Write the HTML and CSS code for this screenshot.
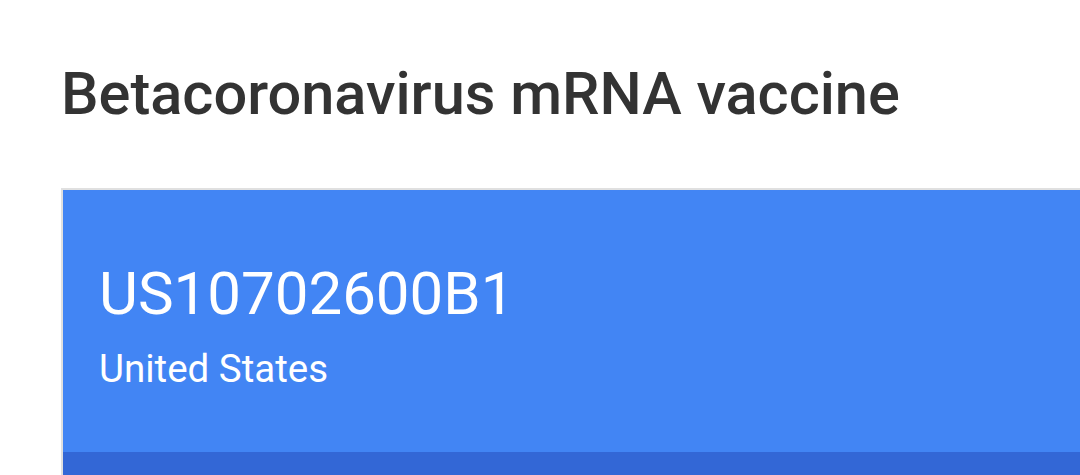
FILE: index.html
```html
<!DOCTYPE html>
<html lang="en">
<head>
  <meta charset="UTF-8" />
  <meta name="viewport" content="width=device-width, initial-scale=1" />
  <title>Betacoronavirus mRNA vaccine</title>
  <link rel="stylesheet" href="styles.css">
</head>
<body>
  <!-- PATENT HEADER -->
  <div class="patent-page">
    <h1 class="patent-title">Betacoronavirus mRNA vaccine</h1>

    <div class="patent-card">
      <div class="patent-card-top">
        <span class="patent-number">US10702600B1</span>
        <span class="patent-country">United States</span>
      </div>
      <div class="patent-card-bar"></div>
    </div>
  </div>
</body>
</html>
```

FILE: styles.css
```css
body {
  margin: 0;
  font-family: Roboto, 'Liberation Sans', sans-serif;
  background-color: #fff;
  color: #333;
  overflow: hidden;
}
.patent-page {
  padding: 59px 0 0 61px;
}
.patent-title {
  margin: 0 0 59px 0;
  font-size: 59.5px;
  font-weight: 500;
  line-height: 70px;
  color: #333;
}
.patent-card {
  border-top: 2px solid #e0e0e0;
  border-left: 2px solid #e0e0e0;
  background-color: #4285f4;
  color: #fff;
}
.patent-card-top {
  display: flex;
  flex-direction: column;
  padding: 69px 36px 61px 36px;
}
.patent-number {
  font-size: 60px;
  line-height: 70px;
  font-weight: 400;
}
.patent-country {
  font-size: 38.5px;
  line-height: 44px;
  margin-top: 18px;
}
.patent-card-bar {
  height: 60px;
  background-color: #3367d6;
}
```
